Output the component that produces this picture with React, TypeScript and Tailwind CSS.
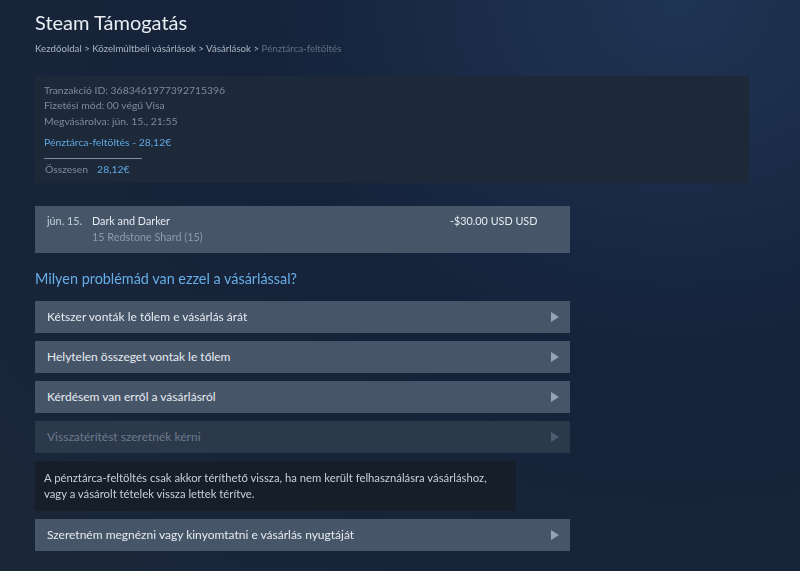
import React from "react";

const Arrow = ({ dim }: { dim?: boolean }) => (
  <svg width="8" height="10" viewBox="0 0 8 10" className="shrink-0">
    <path d="M0 0 L8 5 L0 10 Z" fill={dim ? "#4f5e72" : "#93a3b8"} />
  </svg>
);

const Option = ({ label, dim }: { label: string; dim?: boolean }) => (
  <div
    className={`flex h-[32px] w-[535px] items-center justify-between pl-[12px] pr-[11px] ${
      dim ? "bg-[#2c394b] text-[#6c7b8e]" : "bg-[#475569] text-[#e6ebf0]"
    }`}
  >
    <span className="text-[12px]">{label}</span>
    <Arrow dim={dim} />
  </div>
);

export default function App() {
  return (
    <div className="min-h-[571px] w-full pl-[35px] pt-[9px] pb-[20px] [font-family:'Lato','Noto_Sans',sans-serif]">
      <div className="fixed inset-0 -z-10 bg-[radial-gradient(ellipse_at_85%_0%,#1f3554_0%,#15223a_45%,#1b2738_100%)]" />
      <div className="text-[20px] leading-[26px] text-[#e8edf2]">Steam Támogatás</div>
      <div className="mt-[6px] text-[9.7px] leading-[14px] text-[#aab6c2]">
        Kezdőoldal &gt; Közelmúltbeli vásárlások &gt; Vásárlások &gt;{" "}
        <span className="text-[#5f6f80]">Pénztárca-feltöltés</span>
      </div>

      <div className="mt-[21px] h-[107px] w-[714px] bg-[#1d2839] pl-[9px] pt-[7px] text-[10.4px] leading-[15.3px] text-[#7f8c99]">
        <div>Tranzakció ID: 3683461977392715396</div>
        <div>Fizetési mód: 00 végű Visa</div>
        <div>Megvásárolva: jún. 15., 21:55</div>
        <div className="mt-[6px] text-[#5fa8e0]">Pénztárca-feltöltés - 28,12€</div>
        <div className="mt-[8px] h-px w-[98px] bg-[#7f8c99]" />
        <div className="mt-[3px] flex gap-[9px] pl-[1px]">
          <span>Összesen</span>
          <span className="text-[#5fa8e0]">28,12€</span>
        </div>
      </div>

      <div className="mt-[23px] flex h-[47px] w-[535px] bg-[#475569] pt-[7px] text-[10.8px] leading-[16px]">
        <div className="w-[57px] pl-[12px] text-[#c5d0db]">jún. 15.</div>
        <div className="w-[358px]">
          <div className="text-[#e6ebf0]">Dark and Darker</div>
          <div className="text-[#8e9bab]">15 Redstone Shard (15)</div>
        </div>
        <div className="text-[#e6ebf0]">-$30.00 USD USD</div>
      </div>

      <div className="mt-[16px] text-[14.4px] leading-[20px] text-[#66aee6]">
        Milyen problémád van ezzel a vásárlással?
      </div>

      <div className="mt-[12px] flex flex-col gap-[8px]">
        <Option label="Kétszer vonták le tőlem e vásárlás árát" />
        <Option label="Helytelen összeget vontak le tőlem" />
        <Option label="Kérdésem van erről a vásárlásról" />
        <Option label="Visszatérítést szeretnék kérni" dim />
        <div className="w-[481px] whitespace-nowrap bg-[#161e2a] px-[9px] py-[9px] text-[11.3px] leading-[16px] text-[#c5d0db]">
          A pénztárca-feltöltés csak akkor téríthető vissza, ha nem került felhasználásra vásárláshoz,
          <br />
          vagy a vásárolt tételek vissza lettek térítve.
        </div>
        <Option label="Szeretném megnézni vagy kinyomtatni e vásárlás nyugtáját" />
      </div>
    </div>
  );
}
